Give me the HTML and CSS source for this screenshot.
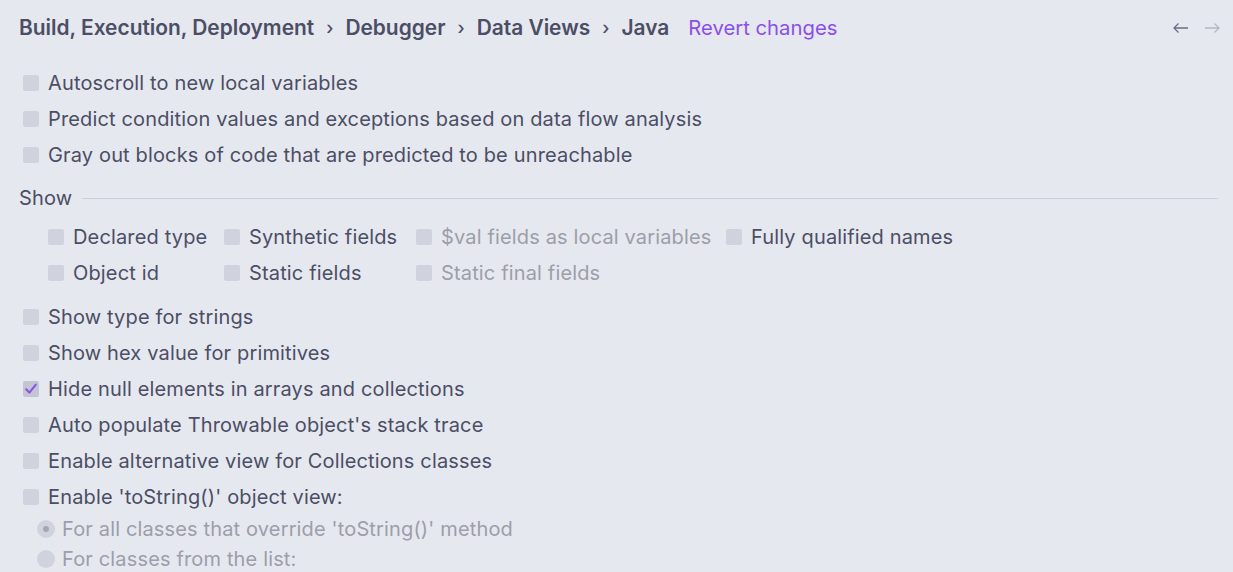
FILE: index.html
```html
<!DOCTYPE html>
<html>
<head>
<meta charset="utf-8">
<link rel="stylesheet" href="styles.css">
</head>
<body>
<div class="page">
  <div class="header">
    <div class="crumbs">
      <span class="crumb">Build, Execution, Deployment</span>
      <span class="sep">›</span>
      <span class="crumb">Debugger</span>
      <span class="sep">›</span>
      <span class="crumb">Data Views</span>
      <span class="sep">›</span>
      <span class="crumb">Java</span>
      <span class="revert">Revert changes</span>
    </div>
    <div class="nav">
      <svg width="17" height="12" viewBox="0 0 17 12"><path d="M16 6H2M6.5 1.5L2 6l4.5 4.5" fill="none" stroke="#6b6e82" stroke-width="1.3"/></svg>
      <svg width="17" height="12" viewBox="0 0 17 12"><path d="M1 6h14M10.5 1.5L15 6l-4.5 4.5" fill="none" stroke="#b4b7c4" stroke-width="1.3"/></svg>
    </div>
  </div>

  <div class="group top">
    <label class="row"><span class="cb"></span>Autoscroll to new local variables</label>
    <label class="row"><span class="cb"></span>Predict condition values and exceptions based on data flow analysis</label>
    <label class="row"><span class="cb"></span>Gray out blocks of code that are predicted to be unreachable</label>
  </div>

  <div class="section">
    <span class="section-title">Show</span>
    <span class="rule"></span>
  </div>

  <div class="showgrid">
    <label class="row"><span class="cb"></span>Declared type</label>
    <label class="row"><span class="cb"></span>Synthetic fields</label>
    <label class="row disabled"><span class="cb"></span>$val fields as local variables</label>
    <label class="row"><span class="cb"></span>Fully qualified names</label>
    <label class="row"><span class="cb"></span>Object id</label>
    <label class="row"><span class="cb"></span>Static fields</label>
    <label class="row disabled"><span class="cb"></span>Static final fields</label>
  </div>

  <div class="group bottom">
    <label class="row"><span class="cb"></span>Show type for strings</label>
    <label class="row"><span class="cb"></span>Show hex value for primitives</label>
    <label class="row"><span class="cb checked"><svg width="14" height="14" viewBox="0 0 14 14"><path d="M2.2 7.2l3.2 3.4L11.8 2.6" fill="none" stroke="#8c4fe6" stroke-width="2" stroke-linecap="round" stroke-linejoin="round"/></svg></span>Hide null elements in arrays and collections</label>
    <label class="row"><span class="cb"></span>Auto populate Throwable object's stack trace</label>
    <label class="row"><span class="cb"></span>Enable alternative view for Collections classes</label>
    <label class="row"><span class="cb"></span>Enable 'toString()' object view:</label>
  </div>

  <div class="radios">
    <label class="radio disabled"><span class="rb selected"></span>For all classes that override 'toString()' method</label>
    <label class="radio disabled"><span class="rb"></span>For classes from the list:</label>
  </div>
</div>
</body>
</html>
```

FILE: styles.css
```css
html, body {
  margin: 0;
  padding: 0;
  background: #e6e8f0;
}
body {
  font-family: Inter, "Noto Sans", sans-serif;
  color: #4b4e64;
  font-size: 20px;
  letter-spacing: 0.15px;
  overflow: hidden;
  height: 572px;
}
.page {
  padding: 0 12px 0 19px;
}
.header {
  display: flex;
  align-items: center;
  justify-content: space-between;
  height: 54px;
}
.crumbs {
  display: flex;
  align-items: center;
  font-size: 20.9px;
  letter-spacing: 0;
  font-weight: 600;
  color: #4b4e64;
  white-space: nowrap;
}
.sep {
  font-weight: 500;
  margin: 0 12px;
  font-size: 18px;
}
.revert {
  color: #8b4fe8;
  font-weight: 400;
  font-size: 20.3px;
  margin-left: 19px;
}
.nav {
  display: flex;
  gap: 15px;
  margin-top: 2px;
}
.group {
  display: flex;
  flex-direction: column;
  padding-left: 4px;
}
.group.top {
  margin-top: 11px;
}
.row {
  display: flex;
  align-items: center;
  height: 36px;
  white-space: nowrap;
}
.cb {
  width: 16px;
  height: 16px;
  border-radius: 2px;
  background: #d0d3de;
  margin-right: 9px;
  flex: none;
  display: flex;
  align-items: center;
  justify-content: center;
}
.cb.checked {
  background: #c3c5d3;
}
.disabled {
  color: #9c9ea9;
}
.section {
  display: flex;
  align-items: center;
  height: 50px;
  padding-right: 3px;
}
.section-title {
  margin-right: 10px;
}
.rule {
  flex: 1;
  height: 1px;
  background: #cdd0da;
}
.showgrid {
  display: grid;
  grid-template-columns: 176px 192px 310px auto;
  padding-left: 29px;
  margin-top: -4px;
  justify-content: start;
}
.group.bottom {
  margin-top: 8px;
}
.radios {
  display: flex;
  flex-direction: column;
  padding-left: 18px;
  margin-top: -1px;
}
.radio {
  display: flex;
  align-items: center;
  height: 30px;
  white-space: nowrap;
}
.rb {
  width: 18px;
  height: 18px;
  border-radius: 50%;
  background: #d0d3de;
  margin-right: 7px;
  flex: none;
  display: flex;
  align-items: center;
  justify-content: center;
}
.rb.selected::after {
  content: "";
  width: 6px;
  height: 6px;
  border-radius: 50%;
  background: #a4a7b4;
}
```
